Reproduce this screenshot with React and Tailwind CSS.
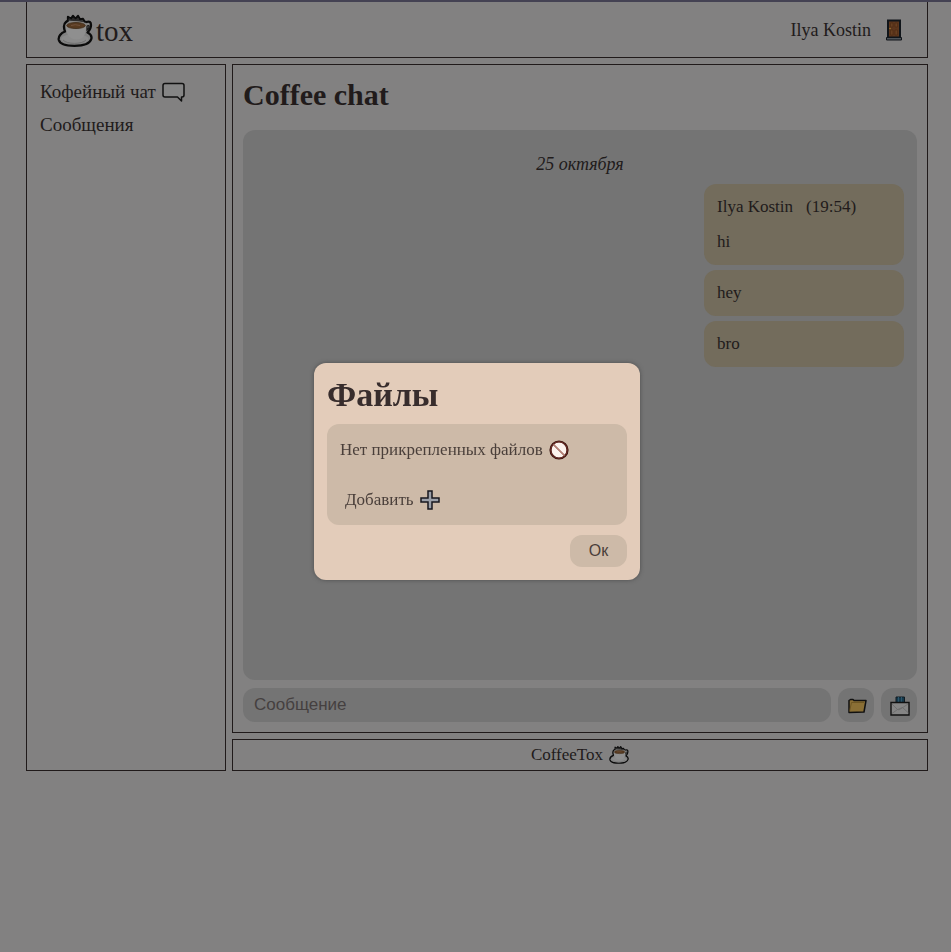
import React from "react";

function CoffeeIcon({ className }) {
  return (
    <svg viewBox="0 0 36 34" className={className} aria-hidden="true">
      <path
        d="M8 17.500C6.500 13.500 6.500 10 9 8l2-1.500V3l3 2 2-3 2.500 3L21 2l2 3.500L26 5l1.500 2.500 2 .5c3-1 4.500 0 4.500 3 0 3.500-1.500 5.500-3.500 7.500 3 1.500 4.500 4 3.800 6.500-1.300 4.500-8.300 6.800-16.800 6.800S3 30.500 1.800 26C1 22.500 4 19 8 17.500z"
        fill="#808080"
        stroke="#0b0b0b"
        strokeWidth="2.300"
        strokeLinejoin="round"
      />
      <path d="M11 6.500 12 4l2.500 1.500 2-2 2 2 2.500-2 1.500 2.500 3 .5 1 1.500z" fill="#2b2a2a" />
      <ellipse cx="17.800" cy="25" rx="13.500" ry="5" fill="#8a8a8a" />
      <path d="M6 26c4 4.500 19 4.500 23 0" fill="none" stroke="#707070" />
      <path d="M9 12c0 8 3 13.500 10.500 13.500S29 20 29 12z" fill="#8f8f8f" />
      <path d="M30 12c2.500-1.500 3 2 0 4z" fill="#777" stroke="#1c1c1c" strokeWidth="1.300" />
      <ellipse cx="19" cy="11.500" rx="10.500" ry="4" fill="#8f8b86" />
      <ellipse cx="19" cy="11.500" rx="9.300" ry="3" fill="#573a20" stroke="#3a2716" strokeWidth=".8" />
      <path d="M14 11.500q4-1.500 9 0" fill="none" stroke="#70503a" />
    </svg>
  );
}

function DoorIcon() {
  return (
    <svg viewBox="0 0 18 22" className="h-[22px] w-[18px]" aria-hidden="true">
      <path d="M3 1.500h12v17H3z" fill="#5c361d" stroke="#10151a" strokeWidth="2" />
      <path d="M1.500 18.500h15v2.500h-15z" fill="#4d5359" stroke="#10151a" />
      <path d="M5.500 4h2.500v4H5.500zM10 4h2.500v4H10zM5.500 11h2.500v5H5.500zM10 11h2.500v5H10z" fill="#673f22" stroke="#4c2a13" strokeWidth=".6" />
      <circle cx="5" cy="9.500" r=".8" fill="#a07c30" />
    </svg>
  );
}

function BubbleIcon() {
  return (
    <svg viewBox="0 0 24 20" className="h-5 w-6" aria-hidden="true">
      <path
        d="M3 1.500h17q2 0 2 2v9.500q0 2-2 2h-.5v4l-4-4H3q-2 0-2-2V3.500q0-2 2-2z"
        fill="#858585"
        stroke="#111"
        strokeWidth="1.500"
        strokeLinejoin="round"
      />
    </svg>
  );
}

function FolderIcon() {
  return (
    <svg viewBox="0 0 20 16" className="h-4 w-5" aria-hidden="true">
      <path d="M2 14.500V2.500L3.500 1.500h2.500L7 2.500h12L17 14z" fill="#8a6f35" stroke="#111" strokeWidth="1.500" strokeLinejoin="round" />
      <path d="M2.500 13.500 4.500 4.500H17" fill="none" stroke="#67501f" strokeWidth=".8" />
    </svg>
  );
}

function MailIcon() {
  return (
    <svg viewBox="0 0 20 20" className="h-5 w-5" aria-hidden="true">
      <path d="M6 1h8.500v6H6z" fill="#173a4c" stroke="#101b22" />
      <path d="M8.500 1v5M11.500 1v5" stroke="#2b566c" />
      <path d="M1 6.500h18v12.500H1z" fill="#858585" stroke="#111" strokeWidth="1.400" />
      <path d="m2 17.500 5.500-4 5-2 6 5.500M2 8l5.500 5.500q1.500 1 3-.5L18 8" fill="none" stroke="#6b6b6b" strokeWidth=".8" />
    </svg>
  );
}

function ForbiddenIcon() {
  return (
    <svg viewBox="0 0 20 20" className="h-5 w-5" aria-hidden="true">
      <circle cx="10" cy="10" r="8.500" fill="#fdf3ee" stroke="#35110e" strokeWidth="2.200" />
      <circle cx="10" cy="10" r="8.300" fill="none" stroke="#87382e" strokeWidth=".8" />
      <path d="m4.500 4.500 11 11" stroke="#84483e" strokeWidth="1.500" />
      <path d="m4.500 4.500 11 11" stroke="#d09a8d" strokeWidth=".7" />
    </svg>
  );
}

function PlusIcon() {
  return (
    <svg viewBox="0 0 20 20" className="h-5 w-5" aria-hidden="true">
      <path d="M8 1h4v7h7v4h-7v7H8v-7H1V8h7z" fill="#9b9fa8" stroke="#17171e" strokeWidth="1.500" />
    </svg>
  );
}

function Message({ children }) {
  return <li className="rounded-xl bg-[#736c5c] px-[13px] py-3 leading-[22px]">{children}</li>;
}

function FilesDialog() {
  return (
    <div className="fixed inset-0 flex items-center justify-center pb-[9px] pl-[3px]">
      <section
        role="dialog"
        aria-modal="true"
        aria-labelledby="files-title"
        className="w-[326px] rounded-xl bg-[#e3ccba] px-[13px] pt-3 pb-[13px] text-[17px] text-[#4a3f3a] shadow-[0_0_4px_#4d4d4d]"
      >
        <h2 id="files-title" className="mb-[9px] text-[34px] leading-10 font-bold text-[#382d2d]">Файлы</h2>
        <div className="flex flex-col items-start gap-[30px] rounded-xl bg-[#cdbaa8] px-[13px] pt-4 pb-[15px]">
          <p className="flex items-center gap-[6px] leading-5">
            Нет прикрепленных файлов <ForbiddenIcon />
          </p>
          <button type="button" className="flex items-center gap-[6px] px-[5px] leading-5">
            Добавить <PlusIcon />
          </button>
        </div>
        <div className="mt-[10px] flex justify-end">
          <button type="button" className="h-8 w-[57px] rounded-xl bg-[#cdbaa8] font-['Liberation_Sans',sans-serif] text-base">
            Ок
          </button>
        </div>
      </section>
    </div>
  );
}

export default function App() {
  return (
    <div className="min-h-screen border-t-2 border-[#444253] bg-[#828181] pr-[23px] pl-[26px] font-['Liberation_Serif',serif] text-[#211b1b]">
      <header className="flex h-14 items-center justify-between border border-t-0 border-[#201a1a] pr-6 pl-[30px]">
        <a href="#home" className="flex items-center gap-[3px] pt-[3px] text-[29px] leading-8">
          <CoffeeIcon className="h-[34px] w-9" />
          tox
        </a>
        <div className="flex items-center gap-[14px] text-lg">
          <a href="#profile">Ilya Kostin</a>
          <button type="button" aria-label="Выйти">
            <DoorIcon />
          </button>
        </div>
      </header>

      <div className="mt-[6px] flex gap-[6px]">
        <nav className="w-[200px] shrink-0 border border-[#201a1a] px-[13px] py-[10px] text-[19px] leading-[33px]">
          <a href="#coffee-chat" className="flex items-center gap-[6px]">
            Кофейный чат <BubbleIcon />
          </a>
          <a href="#messages" className="block">Сообщения</a>
        </nav>

        <div className="flex min-w-0 grow flex-col gap-[6px]">
          <main className="border border-[#201a1a] p-[10px]">
            <h1 className="mb-[15px] text-[30px] leading-10 font-bold">Coffee chat</h1>
            <div className="h-[550px] rounded-xl bg-[#747474] px-[13px] py-[22px]">
              <p className="text-center text-lg leading-6 italic">25 октября</p>
              <ul className="mt-2 ml-auto flex w-[200px] flex-col gap-[5px] text-[17px]">
                <Message>
                  <p className="mb-[13px] flex gap-[13px]">
                    <span>Ilya Kostin</span>
                    <time>(19:54)</time>
                  </p>
                  <p>hi</p>
                </Message>
                <Message>hey</Message>
                <Message>bro</Message>
              </ul>
            </div>
            <form className="mt-2 flex h-[34px] gap-[7px]">
              <input
                type="text"
                aria-label="Сообщение"
                placeholder="Сообщение"
                className="min-w-0 grow rounded-xl bg-[#747474] px-[11px] font-['Liberation_Sans',sans-serif] text-[17px] placeholder:text-[#454040]"
              />
              <button type="button" aria-label="Файлы" className="flex w-9 items-center justify-center rounded-xl bg-[#747474] pt-[2px] pl-[2px]">
                <FolderIcon />
              </button>
              <button type="submit" aria-label="Отправить" className="flex w-9 items-center justify-center rounded-xl bg-[#747474] pt-[2px] pl-[2px]">
                <MailIcon />
              </button>
            </form>
          </main>
          <footer className="flex h-8 items-center justify-center gap-[6px] border border-[#201a1a] text-[17px]">
            CoffeeTox <CoffeeIcon className="h-5 w-5" />
          </footer>
        </div>
      </div>

      <FilesDialog />
    </div>
  );
}
